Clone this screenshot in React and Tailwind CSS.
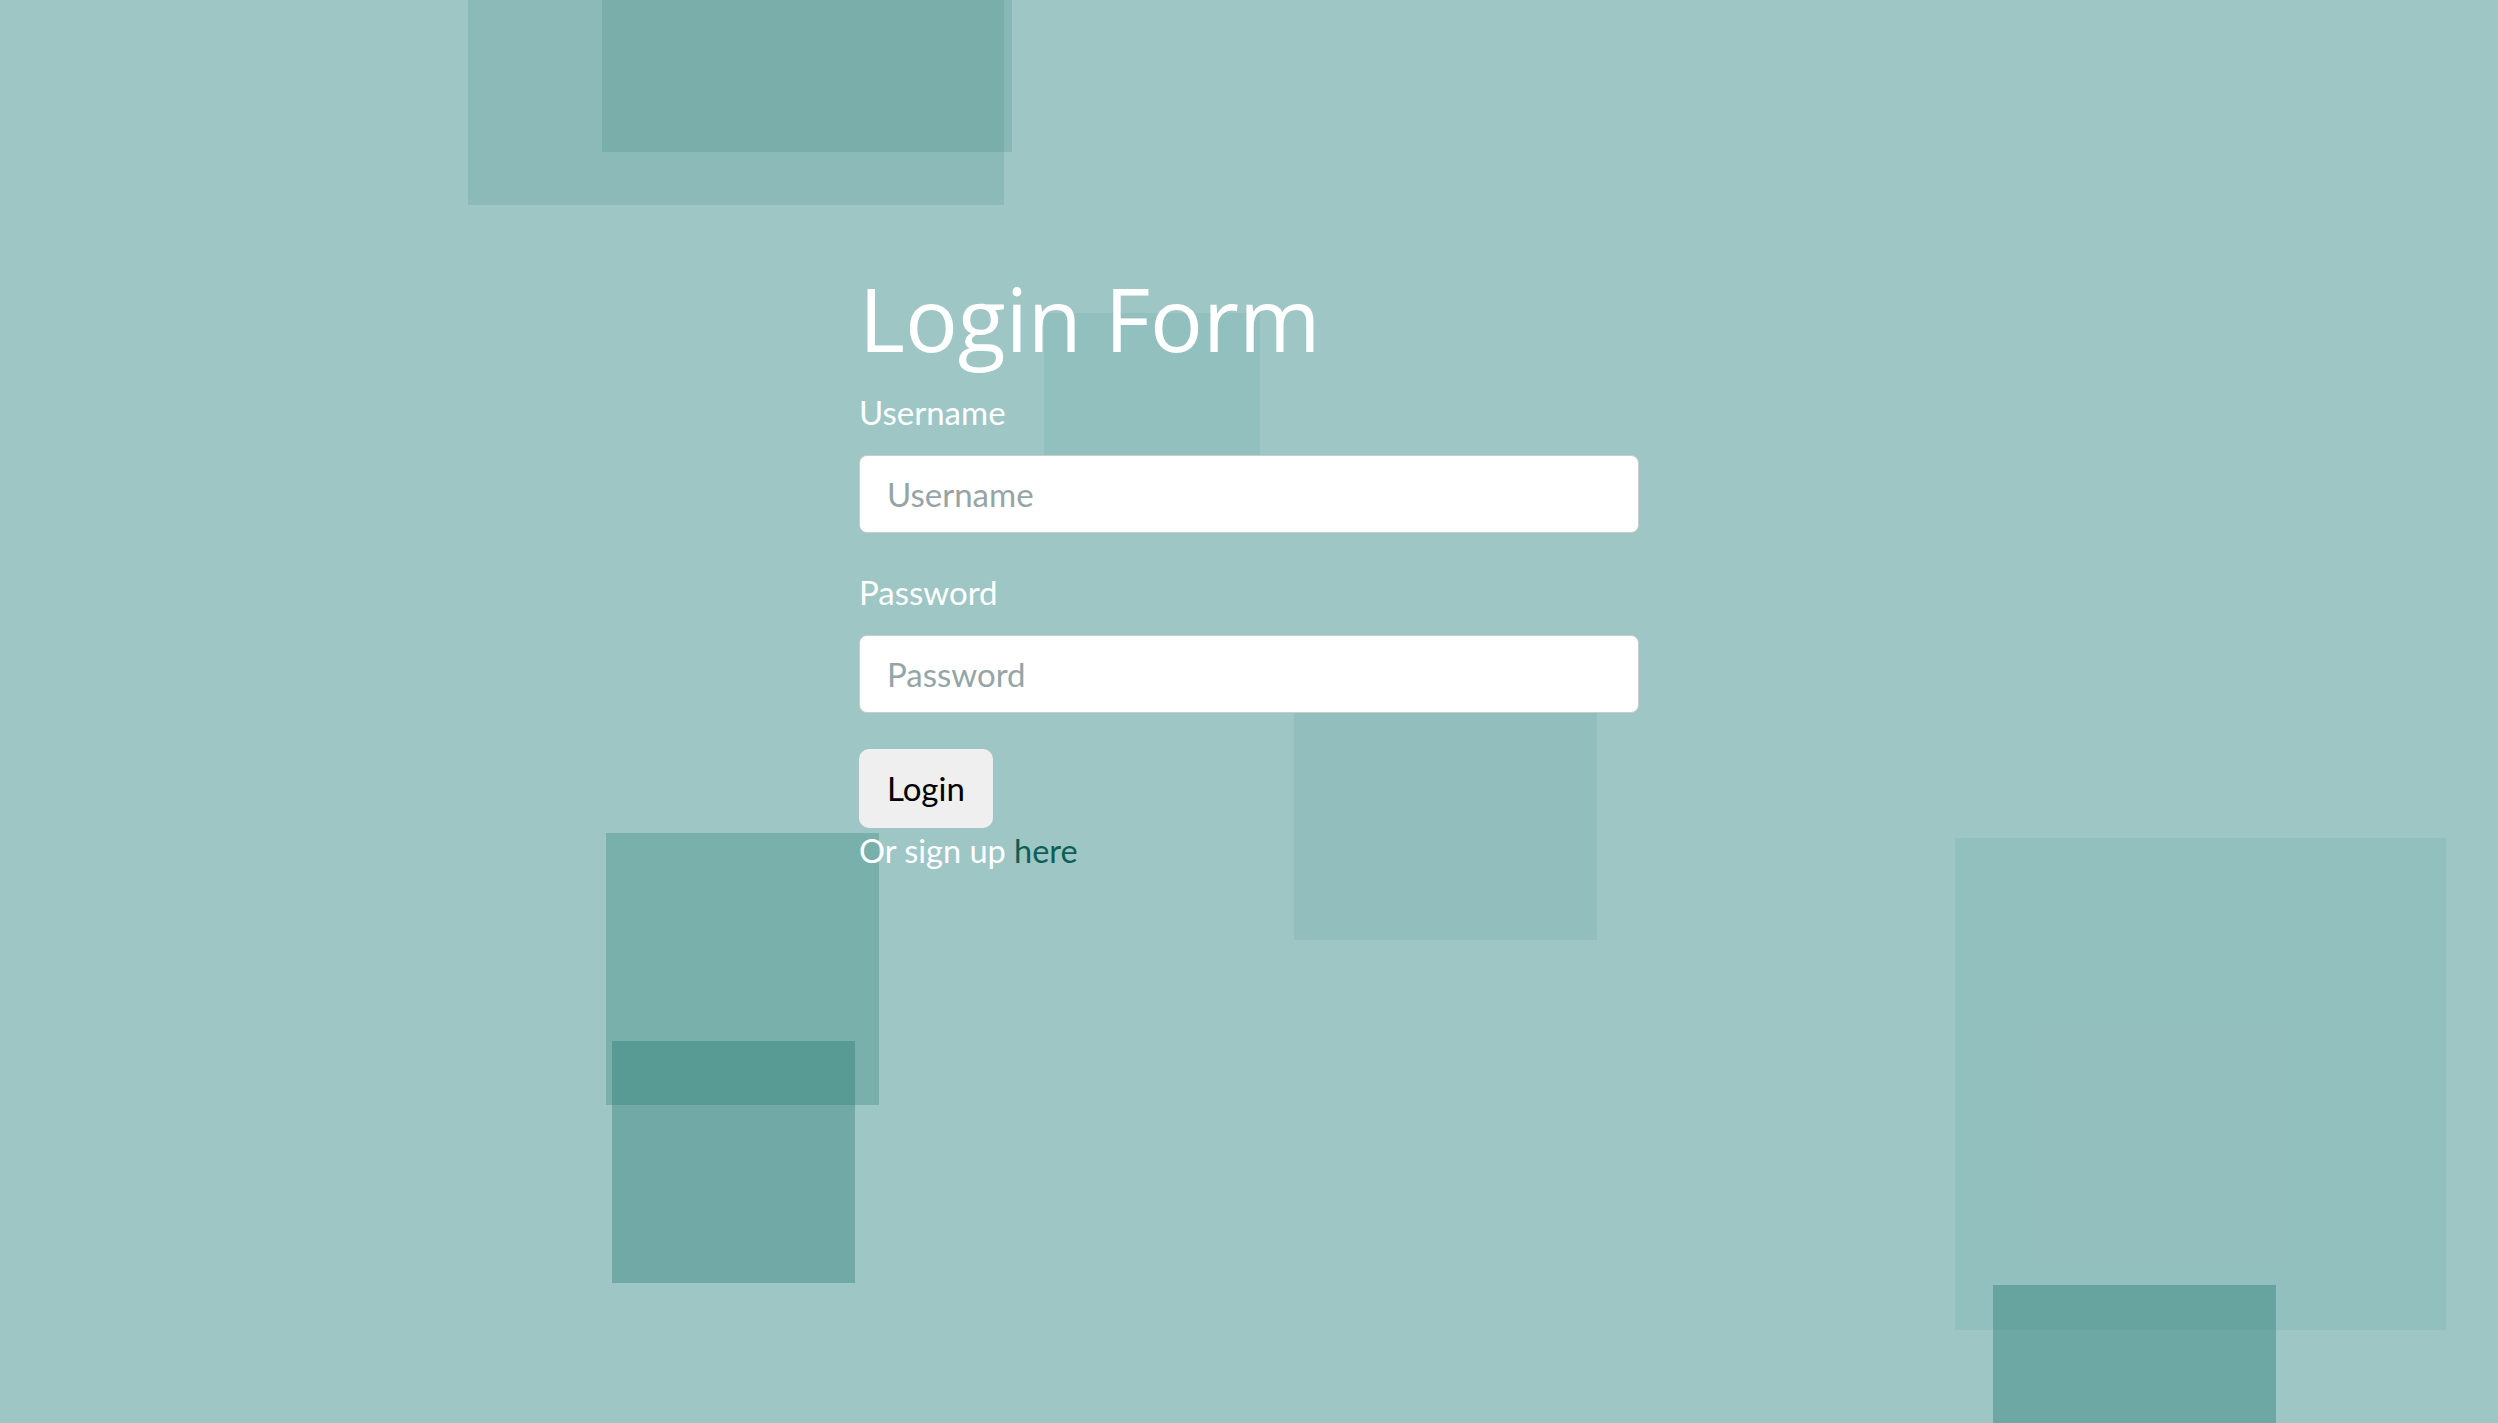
import React from "react";

const squares = [
  { id: "a", cls: "left-[468px] top-[-331px] w-[536px] h-[536px] bg-[rgba(20,110,100,0.13)]" },
  { id: "b", cls: "left-[602px] top-[-258px] w-[410px] h-[410px] bg-[rgba(20,110,100,0.15)]" },
  { id: "c", cls: "left-[1044px] top-[313px] w-[216px] h-[216px] bg-[rgba(20,110,100,0.07)]" },
  { id: "d", cls: "left-[1294px] top-[637px] w-[303px] h-[303px] bg-[rgba(20,110,100,0.08)]" },
  { id: "e", cls: "left-[606px] top-[833px] w-[273px] h-[272px] bg-[rgba(20,110,100,0.25)]" },
  { id: "f", cls: "left-[612px] top-[1041px] w-[243px] h-[242px] bg-[rgba(20,110,100,0.32)]" },
  { id: "g", cls: "left-[1955px] top-[838px] w-[491px] h-[492px] bg-[rgba(20,110,100,0.07)]" },
  { id: "h", cls: "left-[1993px] top-[1285px] w-[283px] h-[283px] bg-[rgba(20,110,100,0.34)]" },
];

function App() {
  return (
    <div className="relative h-screen w-full overflow-hidden bg-[#9dc6c5] font-['Lato','Liberation_Sans',sans-serif]">
      {/* Floating squares */}
      {squares.map((s) => (
        <div key={s.id} className={`absolute ${s.cls}`} />
      ))}

      {/* Form */}
      <form
        className="relative z-10 mx-auto flex w-[780px] flex-col pt-[274px]"
        onSubmit={(e) => e.preventDefault()}
      >
        <h1 className="font-['Open_Sans',sans-serif] text-[88px] leading-[88px] font-normal text-white">
          Login Form
        </h1>

        <label className="mt-[33px] text-[33px] leading-[34px] text-white">
          Username
        </label>
        <input
          type="text"
          placeholder="Username"
          className="mt-[26px] h-[78px] rounded-[8px] border border-[#cccccc] bg-white px-[27px] text-[33px] text-[#333] outline-none placeholder:text-[#95a5a6]"
        />

        <label className="mt-[42px] text-[33px] leading-[34px] text-white">
          Password
        </label>
        <input
          type="password"
          placeholder="Password"
          className="mt-[26px] h-[78px] rounded-[8px] border border-[#cccccc] bg-white px-[27px] text-[33px] text-[#333] outline-none placeholder:text-[#95a5a6]"
        />

        <div className="mt-[36px]">
          <button
            type="submit"
            className="h-[79px] rounded-[10px] bg-[#efefef] px-[28px] text-[33px] text-black"
          >
            Login
          </button>
        </div>

        <p className="mt-[3px] text-[32.5px] leading-[39px] text-white">
          Or sign up{" "}
          <a href="#" className="text-[#0b5f55]">
            here
          </a>
        </p>
      </form>
    </div>
  );
}

export default App;
